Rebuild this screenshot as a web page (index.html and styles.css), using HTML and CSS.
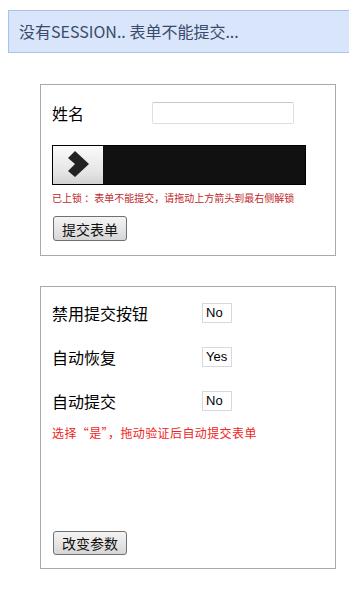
FILE: index.html
```html
<!DOCTYPE html>
<html lang="zh">
<head>
<meta charset="utf-8">
<link rel="stylesheet" href="styles.css">
</head>
<body>
<div class="notice">没有SESSION.. 表单不能提交...</div>

<div class="panel panel-form">
  <div class="row row-name">
    <span class="label">姓名</span>
    <input class="text-input" type="text">
  </div>
  <div class="slider">
    <div class="handle">
      <svg width="50" height="38" viewBox="0 0 50 38">
        <polygon points="15,12 22,5 36,18 22,31 15,25 22,18" fill="#222"/>
      </svg>
    </div>
  </div>
  <div class="lock-msg">已上锁 ：表单不能提交，请拖动上方箭头到最右侧解锁</div>
  <button class="btn">提交表单</button>
</div>

<div class="panel panel-opts">
  <div class="row opt">
    <span class="label label-wide">禁用提交按钮</span>
    <span class="val">No</span>
  </div>
  <div class="row opt">
    <span class="label label-wide">自动恢复</span>
    <span class="val">Yes</span>
  </div>
  <div class="row opt">
    <span class="label label-wide">自动提交</span>
    <span class="val">No</span>
  </div>
  <div class="hint">选择“是”，拖动验证后自动提交表单</div>
  <button class="btn btn-bottom">改变参数</button>
</div>
</body>
</html>
```

FILE: styles.css
```css
html, body {
  overflow-x: hidden;
}
body {
  margin: 8px;
  font-family: "Noto Sans CJK SC", "Noto Sans", sans-serif;
  color: #000;
  background: #fff;
}
.notice {
  margin-top: 2px;
  margin-right: -8px;
  height: 41px;
  border: 1px solid #a6c2f0;
  border-right: none;
  background: #d8e5fb;
  color: #3a4a68;
  font-size: 16px;
  line-height: 41px;
  padding-left: 10px;
}
.panel {
  margin-left: 32px;
  border: 1px solid #a9a9a9;
  box-sizing: content-box;
  padding: 0 0 0 11px;
  width: 283px;
}
.panel-form {
  margin-top: 31px;
  padding-top: 17px;
  padding-bottom: 14px;
}
.row {
  display: flex;
  align-items: center;
}
.row-name {
  height: 22px;
}
.label {
  font-size: 16px;
  width: 100px;
  line-height: 22px;
}
.text-input {
  width: 140px;
  height: 20px;
  margin: 0;
  padding: 0;
  border: 1px solid #dcdfe6;
  border-top-color: #c8c8c8;
  border-radius: 2px;
  background: #fff;
}
.slider {
  margin-top: 21px;
  width: 252px;
  height: 38px;
  border: 1px solid #000;
  background: #111;
}
.handle {
  width: 50px;
  height: 38px;
  background: linear-gradient(#fbfbfb, #e4e4e4 70%, #d2d2d2);
}
.handle svg {
  display: block;
}
.lock-msg {
  margin-top: 6px;
  font-size: 10px;
  line-height: 14px;
  color: #c0282d;
  white-space: nowrap;
}
.btn {
  display: block;
  margin: 11px 0 0 1px;
  width: 74px;
  height: 25px;
  padding: 0;
  border: 1px solid #707070;
  border-radius: 3px;
  background: linear-gradient(#f4f4f4, #e6e6e6 50%, #d6d6d6);
  font-family: "Noto Sans CJK SC", sans-serif;
  font-size: 14px;
  color: #111;
  line-height: 22px;
}
.panel-opts {
  margin-top: 30px;
  padding-top: 16px;
  padding-bottom: 13px;
}
.opt {
  height: 20px;
  margin-bottom: 24px;
}
.row.opt:nth-child(3) {
  margin-bottom: 0;
}
.label-wide {
  width: 150px;
}
.val {
  display: inline-block;
  box-sizing: border-box;
  height: 20px;
  padding: 0 3px;
  min-width: 30px;
  border: 1px solid #d8d8d8;
  font-family: "Liberation Sans", Arial, sans-serif;
  font-size: 13px;
  line-height: 18px;
  color: #000;
}
.hint {
  margin-top: 14px;
  font-size: 12px;
  line-height: 16px;
  letter-spacing: 0.4px;
  color: #f02424;
}
.btn-bottom {
  margin-top: 90px;
  height: 24px;
}
```
